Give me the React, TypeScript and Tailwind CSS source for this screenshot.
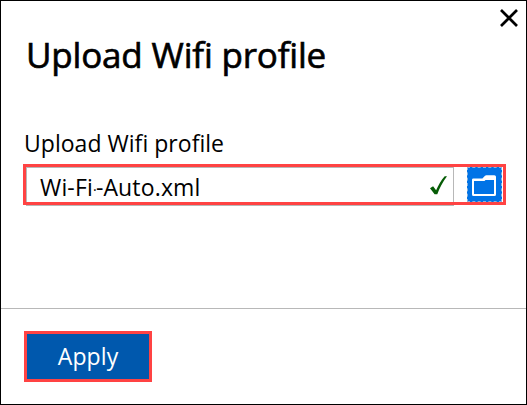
function CloseIcon() {
  return (
    <svg width="18" height="18" viewBox="0 0 18 18" fill="none" stroke="#000" strokeWidth="2.7">
      <path d="M1 1 17 17M17 1 1 17" />
    </svg>
  );
}

function FolderIcon() {
  return (
    <svg width="24" height="21" viewBox="0 0 24 21" fill="#fff" fillRule="evenodd">
      <path d="M0 4.8Q0 3.4 1.4 3.4H10.4L13 .8Q13.6 .2 14.4 .2H22.4Q24 .2 24 1.8V19.5Q24 21 22.5 21H1.5Q0 21 0 19.5ZM2 6V19H22V5H13.5L12.5 6Z" />
    </svg>
  );
}

function CheckIcon() {
  return (
    <svg width="17" height="19" viewBox="0 0 17 19" fill="#065c06">
      <path d="M0 12.2 3.1 10.2 6.1 14.3C8.4 9.2 11.2 4.2 14.7.3L17 .3C12.8 6 9.6 12 7.3 18.2H4.6Z" />
    </svg>
  );
}

export default function App() {
  return (
    <div className="flex h-[405px] w-[527px] flex-col border border-black bg-white font-['Open_Sans','Noto_Sans',sans-serif] text-black">
      <header className="flex h-[121px] justify-between pt-2 pr-[8px] pl-[25px]">
        <h1 className="mt-[20px] text-[35px] leading-[52px] font-medium tracking-[-0.18px] whitespace-nowrap [-webkit-text-stroke:0.65px_black]">
          Upload Wifi profile
        </h1>
        <button aria-label="Close" className="h-[18px]"><CloseIcon /></button>
      </header>
      <main className="flex grow flex-col pl-[22px]">
        <label className="h-[42px] pt-1 pl-px text-[23px] leading-[34px] tracking-[0.03px] whitespace-nowrap">
          Upload Wifi profile
        </label>
        <div className="relative flex h-[41px] w-[483px] pt-[3px] pl-[3px] after:pointer-events-none after:absolute after:inset-0 after:border-[3px] after:border-[#ff4343] after:content-['']">
          <div className="flex h-[39px] w-[428px] shrink-0 items-start justify-between border border-[#b8b8b8] pr-[6px] pl-[13px]">
            <span className="text-[23px] leading-[38px] tracking-[0.15px] whitespace-nowrap">
              Wi-Fi<span className="relative -top-px inline-block w-[3px] text-[14px] leading-none tracking-normal">·</span>-Auto.xml
            </span>
            <span className="mt-[8px]"><CheckIcon /></span>
          </div>
          <button aria-label="Browse" className="ml-[13px] flex h-[35px] w-[35px] items-start border border-dashed border-[#8ab4dc] bg-[#0073e6] pt-[7px] pl-[4px]">
            <FolderIcon />
          </button>
        </div>
      </main>
      <footer className="h-[96px] border-t border-[#b8b8b8] pt-[22px] pl-[23px]">
        <button className="h-[51px] w-[128px] border-[3px] border-[#ff4343] bg-[#0058ad] text-[23px] leading-[45px] tracking-[0.1px] text-white">
          Apply
        </button>
      </footer>
    </div>
  );
}
